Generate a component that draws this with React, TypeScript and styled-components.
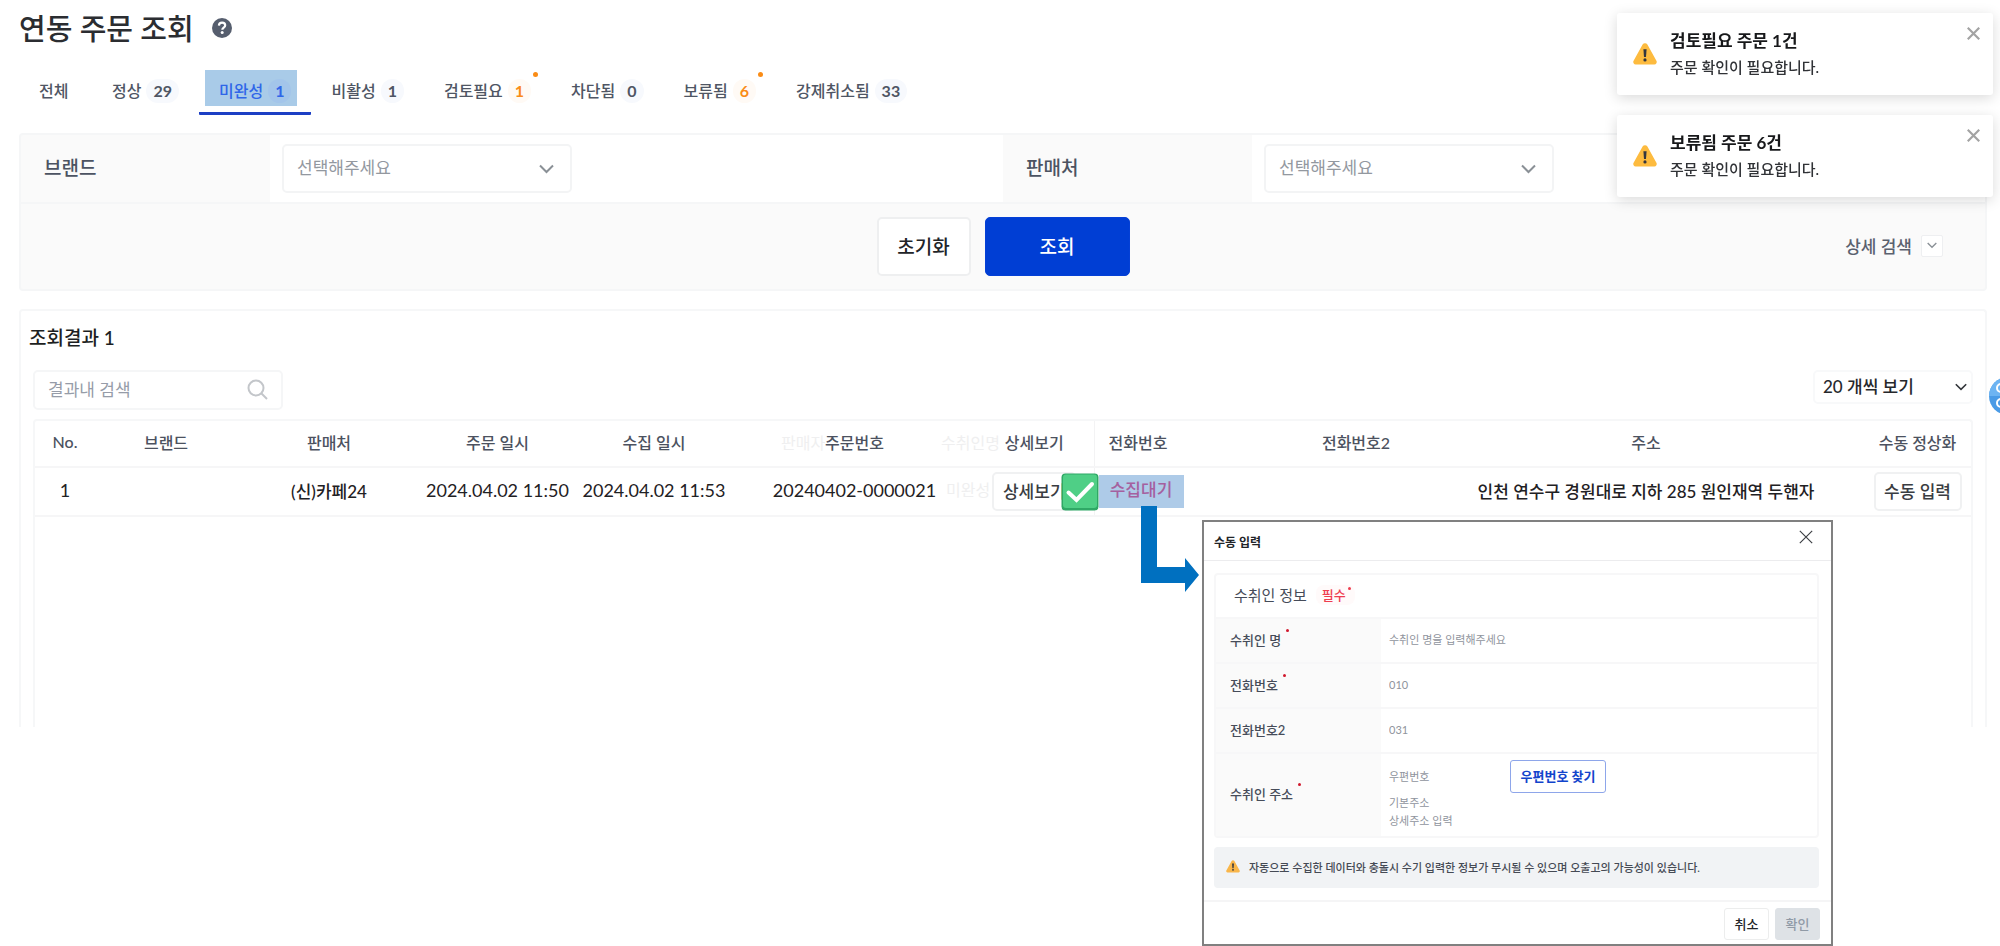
import React from "react";
import styled, { createGlobalStyle } from "styled-components";

const GlobalStyle = createGlobalStyle`
  *, *::before, *::after { box-sizing: border-box; }
  html, body { margin: 0; background: #fff; overflow-x: hidden; }
  body, button, input, select {
    font-family: Lato, "Noto Sans CJK KR", sans-serif;
  }
  h1, h2, h3, p { margin: 0; }
  button { cursor: pointer; padding: 0 0 2px; }
`;

const Page = styled.main`
  position: relative;
  min-height: 946px;
  padding: 8px 13px 0 19px;
  color: #24262b;
`;

const TitleRow = styled.header`
  display: flex;
  align-items: center;
  gap: 18px;
  height: 42px;
`;

const PageTitle = styled.h1`
  font-size: 29px;
  line-height: 42px;
  font-weight: 500;
  color: #2b2d31;
`;

const PlainButton = styled.button`
  display: inline-flex;
  align-items: center;
  justify-content: center;
  border: 0;
  background: none;
`;

const Tabs = styled.nav`
  display: flex;
  height: 65px;
  margin-bottom: 18px;
`;

const Tab = styled.button<{ $active?: boolean }>`
  position: relative;
  display: flex;
  align-items: center;
  gap: 5px;
  min-width: 73px;
  padding: 19px 20px 0;
  border: 0;
  border-bottom: 3px solid ${(p) => (p.$active ? "#1c3fc4" : "transparent")};
  border-radius: 1px;
  background: none;
  font-size: 16px;
  line-height: 24px;
  font-weight: 500;
  color: ${(p) => (p.$active ? "#2f66e8" : "#4f5664")};
`;

const TabMark = styled.span`
  position: absolute;
  left: 6px;
  right: 14px;
  top: 20px;
  height: 36px;
  background: #a9cbe8;
`;

const TabText = styled.span`
  position: relative;
  white-space: nowrap;
`;

const Count = styled.span<{ $tone?: "warn" | "active" }>`
  position: relative;
  min-width: 23px;
  padding: 0 7px;
  border-radius: 12px;
  text-align: center;
  font-weight: 700;
  background: ${(p) =>
    p.$tone === "active" ? "#a3c5ea" : p.$tone === "warn" ? "#fffaf5" : "#f7f9fd"};
  color: ${(p) =>
    p.$tone === "active" ? "#2f66e8" : p.$tone === "warn" ? "#fa8c16" : "#4f5664"};
`;

const Dot = styled.i<{ $color: string; $size: number; $right: number; $top: number }>`
  position: absolute;
  right: ${(p) => p.$right}px;
  top: ${(p) => p.$top}px;
  width: ${(p) => p.$size}px;
  height: ${(p) => p.$size}px;
  border-radius: 50%;
  background: ${(p) => p.$color};
`;

const FilterPanel = styled.form`
  border: 2px solid #f5f6f7;
  border-radius: 4px;
  background: #fafafa;
`;

const FilterRow = styled.div`
  display: grid;
  grid-template-columns: 1fr 1fr;
  border-bottom: 2px solid #f5f6f7;
`;

const FilterItem = styled.div`
  display: grid;
  grid-template-columns: 249px 1fr;
  align-items: stretch;
`;

const FilterLabel = styled.label`
  padding: 0 23px 2px;
  font-size: 19px;
  line-height: 65px;
  font-weight: 500;
  color: #4c5362;
`;

const FilterField = styled.div`
  display: flex;
  align-items: center;
  padding: 0 12px;
  background: #fff;
`;

const SelectWrap = styled.div<{ $width: number }>`
  position: relative;
  display: flex;
  align-items: center;
  width: ${(p) => p.$width}px;
`;

const Select = styled.select<{ $compact?: boolean }>`
  appearance: none;
  width: 100%;
  height: ${(p) => (p.$compact ? 34 : 49)}px;
  padding: 0 ${(p) => (p.$compact ? 8 : 13)}px 2px;
  border: 2px solid ${(p) => (p.$compact ? "#f8f9fa" : "#f3f4f5")};
  border-radius: 5px;
  background: #fff;
  font-size: 17px;
  font-weight: ${(p) => (p.$compact ? 500 : 400)};
  color: ${(p) => (p.$compact ? "#26282c" : "#93989f")};
`;

const SelectArrow = styled.span<{ $right: number }>`
  position: absolute;
  right: ${(p) => p.$right}px;
  display: flex;
  pointer-events: none;
`;

const FilterActions = styled.div`
  display: grid;
  grid-template-columns: 1fr auto 1fr;
  align-items: center;
  padding: 13px 42px;
`;

const MainButtons = styled.div`
  grid-column: 2;
  display: flex;
  gap: 14px;
`;

const ActionButton = styled.button<{ $primary?: boolean }>`
  width: ${(p) => (p.$primary ? 145 : 94)}px;
  height: 59px;
  border: ${(p) => (p.$primary ? "1px solid #0540d6" : "2px solid #eeeff0")};
  border-radius: 5px;
  background: ${(p) => (p.$primary ? "#003ed4" : "#fff")};
  color: ${(p) => (p.$primary ? "#fff" : "#222428")};
  font-size: 19px;
  font-weight: 500;
`;

const MoreButton = styled(PlainButton)`
  justify-self: end;
  gap: 9px;
  font-size: 17px;
  color: #5a616f;
  font-weight: 500;
`;

const MiniBox = styled.span`
  display: flex;
  align-items: center;
  justify-content: center;
  width: 22px;
  height: 22px;
  border: 1px solid #eeeff1;
  border-radius: 2px;
  background: #fff;
`;

const ResultPanel = styled.section`
  margin-top: 18px;
  height: 418px;
  padding: 12px 12px 0;
  border: 2px solid #f6f7f8;
  border-bottom: 0;
  border-radius: 4px 4px 0 0;
`;

const ResultTitle = styled.h2`
  margin-left: -4px;
  font-size: 19px;
  line-height: 30px;
  font-weight: 500;
  color: #1d1f22;
`;

const ResultTools = styled.div`
  display: flex;
  justify-content: space-between;
  align-items: flex-start;
  margin: 17px 0 9px;
`;

const SearchBox = styled.div`
  display: flex;
  align-items: center;
  width: 250px;
  height: 40px;
  padding: 0 13px 2px;
  border: 2px solid #f5f6f7;
  border-radius: 5px;
`;

const SearchInput = styled.input`
  flex: 1;
  min-width: 0;
  padding: 0;
  border: 0;
  outline: 0;
  font-size: 17px;
  &::placeholder { color: #969ca8; opacity: 1; }
`;

const OrderTable = styled.table`
  width: 100%;
  table-layout: fixed;
  border-collapse: collapse;
  border-bottom: 2px solid #f6f6f7;
`;

const TableFrame = styled.div`
  height: 308px;
  border: 2px solid #f6f7f8;
  border-bottom: 0;
  border-radius: 4px 4px 0 0;
`;

const Th = styled.th<{ $left?: boolean; $edge?: boolean }>`
  position: relative;
  height: 46px;
  padding: 0 0 4px ${(p) => (p.$left ? 14 : 0)}px;
  border-bottom: 2px solid #f6f6f7;
  ${(p) => p.$edge && "border-right: 1px solid #f3f3f4;"}
  text-align: ${(p) => (p.$left ? "left" : "center")};
  font-size: 16px;
  font-weight: 500;
  color: #4c5260;
  white-space: nowrap;
`;

const Td = styled.td<{ $numeric?: boolean; $edge?: boolean; $flush?: boolean }>`
  position: relative;
  height: 49px;
  padding: 0 0 ${(p) => (p.$flush ? 0 : 3)}px;
  ${(p) => p.$edge && "border-right: 1px solid #f3f3f4;"}
  text-align: center;
  font-size: ${(p) => (p.$numeric ? 18 : 17)}px;
  font-weight: ${(p) => (p.$numeric ? 400 : 500)};
  color: #1f2124;
  white-space: nowrap;
`;

const HeadText = styled.span`
  position: relative;
`;

const Faded = styled.span<{ $left: number }>`
  position: absolute;
  left: ${(p) => p.$left}px;
  top: 10px;
  font-size: 16px;
  line-height: 24px;
  font-weight: 400;
  color: #efeff0;
`;

const CellButton = styled.button<{ $width: number }>`
  width: ${(p) => p.$width}px;
  height: 39px;
  border: 2px solid #f0f1f2;
  border-radius: 5px;
  background: #fff;
  font-size: 17px;
  font-weight: 500;
  color: #3a3d42;
  vertical-align: middle;
`;

const WaitMark = styled.span`
  display: block;
  width: 85px;
  height: 33px;
  margin-left: 4px;
  background: #aecbe8;
  color: #a5609f;
  font-size: 17px;
  line-height: 30px;
`;

const CheckMark = styled.svg`
  position: absolute;
  left: -34px;
  top: 5px;
  z-index: 1;
`;

const Arrow = styled.svg`
  position: absolute;
  left: 1141px;
  top: 506px;
`;

const Toasts = styled.aside`
  position: fixed;
  top: 13px;
  right: 7px;
  z-index: 3;
  display: grid;
  gap: 20px;
  width: 376px;
`;

const Toast = styled.section`
  display: flex;
  align-items: flex-start;
  height: 82px;
  padding: 14px 13px 0 16px;
  border-radius: 3px;
  background: #fff;
  box-shadow: 0 3px 14px rgba(0, 0, 0, 0.15);
`;

const ToastIcon = styled.span`
  display: flex;
  margin: 16px 13px 0 0;
`;

const ToastBody = styled.div`
  flex: 1;
`;

const ToastTitle = styled.h3`
  font-size: 17px;
  line-height: 28px;
  font-weight: 700;
  color: #17181a;
`;

const ToastText = styled.p`
  font-size: 15px;
  line-height: 24px;
  font-weight: 500;
  color: #303236;
`;

const FloatBadge = styled.button`
  position: fixed;
  top: 377px;
  right: -27px;
  width: 38px;
  height: 38px;
  padding: 0;
  border: 0;
  border-radius: 50%;
  background: none;
`;

const Modal = styled.section`
  position: absolute;
  left: 1202px;
  top: 520px;
  z-index: 2;
  width: 631px;
  border: 2px solid #808080;
  background: #fff;
`;

const ModalHead = styled.header`
  display: flex;
  align-items: center;
  justify-content: space-between;
  height: 39px;
  padding: 0 18px 0 10px;
  border-bottom: 1px solid #ececee;
`;

const ModalClose = styled(PlainButton)`
  align-self: flex-start;
  padding: 8px 0 0;
`;

const ModalTitle = styled.h2`
  font-size: 12px;
  font-weight: 700;
  color: #222428;
`;

const ModalBody = styled.div`
  padding: 12px 12px 12px 10px;
`;

const FormBox = styled.div`
  border: 2px solid #f7f7f8;
  border-radius: 4px;
`;

const FormHead = styled.div`
  display: flex;
  align-items: center;
  gap: 9px;
  height: 42px;
  padding: 0 18px 3px;
`;

const FormTitle = styled.h3`
  font-size: 15px;
  line-height: 22px;
  font-weight: 400;
  color: #454b58;
`;

const Required = styled.span`
  position: relative;
  padding: 0 9px 0 6px;
  border-radius: 8px;
  background: #fffafa;
  font-size: 13px;
  line-height: 20px;
  font-weight: 500;
  color: #ee3d4f;
`;

const FormRow = styled.div<{ $tall?: boolean }>`
  display: grid;
  grid-template-columns: 165px 1fr;
  height: ${(p) => (p.$tall ? 84 : 45)}px;
  border-top: 2px solid #f7f7f8;
`;

const FormLabel = styled.label`
  display: flex;
  align-items: center;
  padding: 0 0 3px 14px;
  background: #fafafa;
  font-size: 13px;
  font-weight: 500;
  color: #464c59;
`;

const LabelText = styled.span`
  position: relative;
`;

const FormField = styled.div`
  display: flex;
  align-items: center;
  padding: 0 0 3px 8px;
`;

const TextInput = styled.input<{ $width?: number }>`
  width: ${(p) => (p.$width ? p.$width + "px" : "100%")};
  height: 18px;
  padding: 0;
  border: 0;
  outline: 0;
  background: none;
  font-size: 11px;
  &::placeholder { color: #8f949d; opacity: 1; }
`;

const AddressFields = styled.div`
  display: flex;
  flex-direction: column;
  padding: 6px 0 0 8px;
`;

const ZipRow = styled.div`
  display: flex;
  align-items: center;
`;

const ZipButton = styled.button`
  width: 96px;
  height: 33px;
  border: 1px solid #8ea6ea;
  border-radius: 3px;
  background: #fff;
  color: #1244cc;
  font-size: 13px;
  font-weight: 700;
`;

const Notice = styled.p`
  display: flex;
  align-items: center;
  gap: 9px;
  height: 41px;
  margin-top: 9px;
  padding: 0 12px 2px;
  border-radius: 4px;
  background: #f1f3f5;
  font-size: 11px;
  font-weight: 500;
  color: #454a54;
`;

const ModalFoot = styled.footer`
  display: flex;
  justify-content: flex-end;
  gap: 6px;
  padding: 6px 11px 4px;
  border-top: 2px solid #f5f5f6;
`;

const FootButton = styled.button<{ $muted?: boolean }>`
  width: 45px;
  height: 32px;
  border: 1px solid ${(p) => (p.$muted ? "#dee2e6" : "#eceded")};
  border-radius: 3px;
  background: ${(p) => (p.$muted ? "#dee2e6" : "#fff")};
  color: ${(p) => (p.$muted ? "#909aa6" : "#222428")};
  font-size: 13px;
  font-weight: 500;
`;

const Chevron = ({ w = 15, color = "#8a9096", stroke = 2 }) => (
  <svg width={w} height={(w * 10) / 15} viewBox="0 0 15 10" fill="none" aria-hidden="true">
    <path d="M1 1.5 7.5 8 14 1.5" stroke={color} strokeWidth={stroke} />
  </svg>
);

const Cross = ({ size = 13, color = "#a3a3a3", stroke = 2 }) => (
  <svg width={size} height={size} viewBox="0 0 12 12" fill="none" aria-hidden="true">
    <path d="M.7.7 11.3 11.3M11.3.7.7 11.3" stroke={color} strokeWidth={stroke} />
  </svg>
);

const Warning = ({ w = 24, color = "#fdbb3f" }) => (
  <svg width={w} height={(w * 22) / 24} viewBox="0 0 24 22" aria-hidden="true">
    <path
      d="M9.6 1.6a2.8 2.8 0 0 1 4.8 0l9 16.2a2.4 2.4 0 0 1-2.1 3.6H2.700a2.4 2.4 0 0 1-2.1-3.6z"
      fill={color}
    />
    <path d="M10.4 6.200h3.200l-.6 7.800h-2z" fill="#33363f" />
    <circle cx="12" cy="16.9" r="1.6" fill="#33363f" />
  </svg>
);

const tabs: { name: string; count?: number; active?: boolean; warn?: boolean }[] = [
  { name: "전체" },
  { name: "정상", count: 29 },
  { name: "미완성", count: 1, active: true },
  { name: "비활성", count: 1 },
  { name: "검토필요", count: 1, warn: true },
  { name: "차단됨", count: 0 },
  { name: "보류됨", count: 6, warn: true },
  { name: "강제취소됨", count: 33 },
];

const filters = [
  { id: "brand", label: "브랜드" },
  { id: "seller", label: "판매처" },
];

const columns = [60, 142, 184, 153, 160, 241, 119, 190, 144, undefined, 107];

const contacts = [
  { id: "name", label: "수취인 명", hint: "수취인 명을 입력해주세요", required: true },
  { id: "tel", label: "전화번호", hint: "010", required: true },
  { id: "tel2", label: "전화번호2", hint: "031", required: false },
];

const toasts = ["검토필요 주문 1건", "보류됨 주문 6건"];

export default function App() {
  return (
    <Page>
      <GlobalStyle />
      <TitleRow>
        <PageTitle>연동 주문 조회</PageTitle>
        <PlainButton aria-label="도움말">
          <svg width="20" height="20" viewBox="0 0 20 20">
            <circle cx="10" cy="10" r="10" fill="#565e6e" />
            <path
              d="M6.900 7.600C7 5.600 8.300 4.600 10.100 4.600c1.800 0 3.100 1 3.100 2.700 0 2.300-2.900 2.300-2.900 4.400"
              fill="none"
              stroke="#fff"
              strokeWidth="2.200"
            />
            <circle cx="10.200" cy="14.600" r="1.500" fill="#fff" />
          </svg>
        </PlainButton>
      </TitleRow>

      <Tabs>
        {tabs.map((t) => (
          <Tab key={t.name} $active={t.active}>
            {t.active && <TabMark />}
            <TabText>{t.name}</TabText>
            {t.count !== undefined && (
              <Count $tone={t.active ? "active" : t.warn ? "warn" : undefined}>{t.count}</Count>
            )}
            {t.warn && <Dot $color="#fa8c16" $size={5} $right={13} $top={22} />}
          </Tab>
        ))}
      </Tabs>

      <FilterPanel onSubmit={(e) => e.preventDefault()}>
        <FilterRow>
          {filters.map((f) => (
            <FilterItem key={f.id}>
              <FilterLabel htmlFor={f.id}>{f.label}</FilterLabel>
              <FilterField>
                <SelectWrap $width={290}>
                  <Select id={f.id}>
                    <option>선택해주세요</option>
                  </Select>
                  <SelectArrow $right={18}>
                    <Chevron />
                  </SelectArrow>
                </SelectWrap>
              </FilterField>
            </FilterItem>
          ))}
        </FilterRow>
        <FilterActions>
          <MainButtons>
            <ActionButton type="reset">초기화</ActionButton>
            <ActionButton type="submit" $primary>
              조회
            </ActionButton>
          </MainButtons>
          <MoreButton type="button">
            상세 검색
            <MiniBox>
              <Chevron w={10} stroke={2} />
            </MiniBox>
          </MoreButton>
        </FilterActions>
      </FilterPanel>

      <ResultPanel>
        <ResultTitle>조회결과 1</ResultTitle>
        <ResultTools>
          <SearchBox>
            <SearchInput aria-label="결과내 검색" placeholder="결과내 검색" />
            <svg width="21" height="21" viewBox="0 0 21 21" fill="none" aria-hidden="true">
              <circle cx="9" cy="9" r="7.500" stroke="#c3c6ca" strokeWidth="2" />
              <path d="M14.500 14.500 20 20" stroke="#c3c6ca" strokeWidth="2" />
            </svg>
          </SearchBox>
          <SelectWrap $width={160}>
            <Select $compact aria-label="페이지당 개수">
              <option>20 개씩 보기</option>
            </Select>
            <SelectArrow $right={6}>
              <Chevron w={12} color="#33363b" />
            </SelectArrow>
          </SelectWrap>
        </ResultTools>
        <TableFrame>
          <OrderTable>
            <colgroup>
              {columns.map((w, i) => (
                <col key={i} width={w} />
              ))}
            </colgroup>
            <thead>
              <tr>
                <Th>No.</Th>
                <Th>브랜드</Th>
                <Th>판매처</Th>
                <Th>주문 일시</Th>
                <Th>수집 일시</Th>
                <Th>
                  <Faded $left={47}>판매자</Faded>
                  <HeadText>주문번호</HeadText>
                  <Faded $left={207}>수취인명</Faded>
                </Th>
                <Th $edge>상세보기</Th>
                <Th $left>전화번호</Th>
                <Th>전화번호2</Th>
                <Th>주소</Th>
                <Th>수동 정상화</Th>
              </tr>
            </thead>
            <tbody>
              <tr>
                <Td $numeric>1</Td>
                <Td />
                <Td>(신)카페24</Td>
                <Td $numeric>2024.04.02 11:50</Td>
                <Td $numeric>2024.04.02 11:53</Td>
                <Td $numeric>
                  20240402-0000021
                  <Faded $left={212}>미완성</Faded>
                </Td>
                <Td $edge $flush>
                  <CellButton $width={84}>상세보기</CellButton>
                </Td>
                <Td $flush>
                  <CheckMark width="38" height="38" viewBox="0 0 38 38" aria-label="완료">
                    <rect x=".5" y=".5" width="37" height="37" rx="4" fill="#2fa866" />
                    <rect x="2" y="1.500" width="34" height="33.500" rx="3" fill="#4fcf86" />
                    <path
                      d="M7.500 19.500 15.500 27 31 11"
                      fill="none"
                      stroke="#fff"
                      strokeWidth="4"
                      strokeLinecap="round"
                    />
                  </CheckMark>
                  <WaitMark>수집대기</WaitMark>
                </Td>
                <Td />
                <Td>인천 연수구 경원대로 지하 285 원인재역 두핸자</Td>
                <Td $flush>
                  <CellButton $width={88}>수동 입력</CellButton>
                </Td>
              </tr>
            </tbody>
          </OrderTable>
        </TableFrame>
      </ResultPanel>

      <Arrow width="59" height="86" viewBox="0 0 59 86" aria-hidden="true">
        <path d="M0 0h16v61h28v-9l14 17-14 17v-9H0z" fill="#0070c0" />
      </Arrow>

      <Modal role="dialog" aria-labelledby="manual-title">
        <ModalHead>
          <ModalTitle id="manual-title">수동 입력</ModalTitle>
          <ModalClose aria-label="닫기">
            <Cross size={14} color="#3c3f44" stroke={1} />
          </ModalClose>
        </ModalHead>
        <ModalBody>
          <FormBox>
            <FormHead>
              <FormTitle>수취인 정보</FormTitle>
              <Required>
                필수
                <Dot $color="#ee3d4f" $size={3} $right={4} $top={2} />
              </Required>
            </FormHead>
            {contacts.map((c) => (
              <FormRow key={c.id}>
                <FormLabel htmlFor={c.id}>
                  <LabelText>
                    {c.label}
                    {c.required && <Dot $color="#d0182c" $size={3} $right={-8} $top={-1} />}
                  </LabelText>
                </FormLabel>
                <FormField>
                  <TextInput id={c.id} placeholder={c.hint} />
                </FormField>
              </FormRow>
            ))}
            <FormRow $tall>
              <FormLabel htmlFor="zip">
                <LabelText>
                  수취인 주소
                  <Dot $color="#d0182c" $size={3} $right={-8} $top={-1} />
                </LabelText>
              </FormLabel>
              <AddressFields>
                <ZipRow>
                  <TextInput id="zip" $width={121} placeholder="우편번호" />
                  <ZipButton>우편번호 찾기</ZipButton>
                </ZipRow>
                <TextInput aria-label="기본주소" placeholder="기본주소" />
                <TextInput aria-label="상세주소" placeholder="상세주소 입력" />
              </AddressFields>
            </FormRow>
          </FormBox>
          <Notice>
            <Warning w={14} color="#f9b64a" />
            자동으로 수집한 데이터와 충돌시 수기 입력한 정보가 무시될 수 있으며 오출고의 가능성이 있습니다.
          </Notice>
        </ModalBody>
        <ModalFoot>
          <FootButton>취소</FootButton>
          <FootButton $muted>확인</FootButton>
        </ModalFoot>
      </Modal>

      <Toasts>
        {toasts.map((t) => (
          <Toast key={t}>
            <ToastIcon>
              <Warning />
            </ToastIcon>
            <ToastBody>
              <ToastTitle>{t}</ToastTitle>
              <ToastText>주문 확인이 필요합니다.</ToastText>
            </ToastBody>
            <PlainButton aria-label="알림 닫기">
              <Cross />
            </PlainButton>
          </Toast>
        ))}
      </Toasts>

      <FloatBadge aria-label="도구">
        <svg width="38" height="38" viewBox="0 0 38 38">
          <circle cx="19" cy="19" r="19" fill="#4a9be6" />
          <path d="M0 19a19 19 0 0 1 38 0z" fill="#6db4f2" />
          <circle cx="12" cy="11" r="4" fill="none" stroke="#fff" strokeWidth="2" />
          <circle cx="12" cy="26" r="4" fill="none" stroke="#fff" strokeWidth="2" />
        </svg>
      </FloatBadge>
    </Page>
  );
}
